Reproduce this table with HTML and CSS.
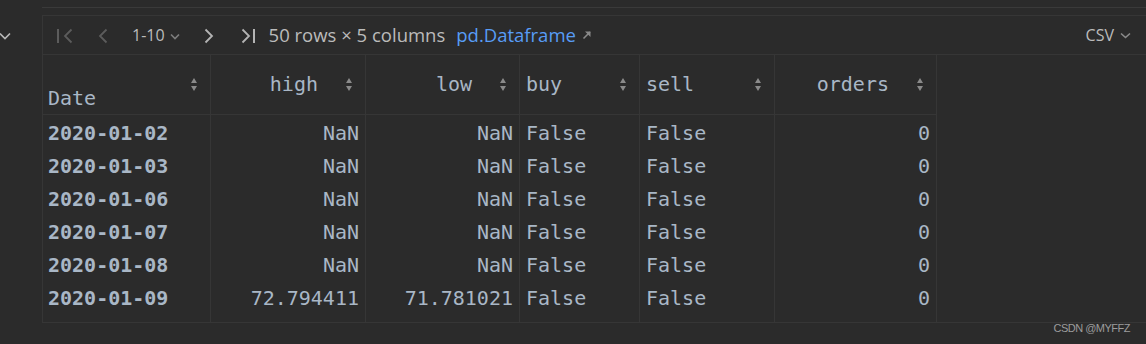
FILE: index.html
```html
<!DOCTYPE html>
<html>
<head>
<meta charset="utf-8">
<link rel="stylesheet" href="styles.css">
</head>
<body>
<div class="page">
  <div class="gutter">
    <svg class="fold" width="12" height="8" viewBox="0 0 12 8"><path d="M1 1.5 L6 6.5 L11 1.5" fill="none" stroke="#b8b8b8" stroke-width="1.6"/></svg>
  </div>
  <div class="main">
    <div class="topline"></div>
    <div class="panel">
      <div class="toolbar">
        <svg class="ic ic-first" width="16" height="16" viewBox="0 0 16 16"><path d="M1 1 V15" stroke="#5c5c5c" stroke-width="2"/><path d="M14.5 1.5 L8 8 L14.5 14.5" fill="none" stroke="#5c5c5c" stroke-width="1.8"/></svg>
        <svg class="ic ic-prev" width="11" height="16" viewBox="0 0 11 16"><path d="M9.5 1.5 L3 8 L9.5 14.5" fill="none" stroke="#5c5c5c" stroke-width="1.8"/></svg>
        <span class="range">1-10</span>
        <svg class="ic ic-dd" width="10" height="7" viewBox="0 0 10 7"><path d="M1 1.5 L5 5.5 L9 1.5" fill="none" stroke="#7d7d7d" stroke-width="1.6"/></svg>
        <svg class="ic ic-next" width="11" height="16" viewBox="0 0 11 16"><path d="M1.5 1.5 L8 8 L1.5 14.5" fill="none" stroke="#b4b4b4" stroke-width="1.8"/></svg>
        <svg class="ic ic-last" width="15" height="16" viewBox="0 0 15 16"><path d="M1.5 1.5 L8 8 L1.5 14.5" fill="none" stroke="#b4b4b4" stroke-width="1.8"/><path d="M13 1 V15" stroke="#b4b4b4" stroke-width="2"/></svg>
        <span class="summary">50 rows × 5 columns</span>
        <span class="link">pd.Dataframe</span>
        <svg class="ic ic-ext" width="10" height="10" viewBox="0 0 10 10"><path d="M1.5 8.5 L8 2" stroke="#8a8a8a" stroke-width="1.6"/><path d="M3 1.5 H8.5 V7 Z" fill="#8a8a8a"/></svg>
        <span class="spacer"></span>
        <span class="fmt">CSV</span>
        <svg class="ic ic-fmt" width="11" height="7" viewBox="0 0 11 7"><path d="M1 1.5 L5.5 5.5 L10 1.5" fill="none" stroke="#8a8a8a" stroke-width="1.6"/></svg>
      </div>
      <table class="grid">
        <colgroup>
          <col class="c-date"><col class="c-high"><col class="c-low"><col class="c-buy"><col class="c-sell"><col class="c-orders">
        </colgroup>
        <thead>
          <tr>
            <th><div class="hc hc-index"><span class="ht">Date</span><span class="sort"></span></div></th>
            <th><div class="hc hc-num"><span class="ht">high</span><span class="sort"></span></div></th>
            <th><div class="hc hc-num"><span class="ht">low</span><span class="sort"></span></div></th>
            <th><div class="hc hc-text"><span class="ht">buy</span><span class="sort"></span></div></th>
            <th><div class="hc hc-text"><span class="ht">sell</span><span class="sort"></span></div></th>
            <th><div class="hc hc-num"><span class="ht">orders</span><span class="sort"></span></div></th>
          </tr>
        </thead>
        <tbody>
          <tr class="first"><td class="idx">2020-01-02</td><td class="num">NaN</td><td class="num">NaN</td><td>False</td><td>False</td><td class="num">0</td></tr>
          <tr><td class="idx">2020-01-03</td><td class="num">NaN</td><td class="num">NaN</td><td>False</td><td>False</td><td class="num">0</td></tr>
          <tr><td class="idx">2020-01-06</td><td class="num">NaN</td><td class="num">NaN</td><td>False</td><td>False</td><td class="num">0</td></tr>
          <tr><td class="idx">2020-01-07</td><td class="num">NaN</td><td class="num">NaN</td><td>False</td><td>False</td><td class="num">0</td></tr>
          <tr><td class="idx">2020-01-08</td><td class="num">NaN</td><td class="num">NaN</td><td>False</td><td>False</td><td class="num">0</td></tr>
          <tr class="last"><td class="idx">2020-01-09</td><td class="num">72.794411</td><td class="num">71.781021</td><td>False</td><td>False</td><td class="num">0</td></tr>
        </tbody>
      </table>
    </div>
  </div>
</div>
<div class="watermark">CSDN @MYFFZ</div>
</body>
</html>
```

FILE: styles.css
```css
html, body {
  margin: 0;
  padding: 0;
  background: #2b2b2b;
  width: 1146px;
  height: 344px;
  overflow: hidden;
}

body {
  position: relative;
  font-family: "Open Sans", "Noto Sans", sans-serif;
  color: #bbbbbb;
}

.page {
  display: flex;
}

.gutter {
  width: 42px;
  flex: none;
  padding-top: 32px;
}

.fold {
  display: block;
  margin-left: -1px;
}

.main {
  flex: 1;
  min-width: 0;
}

.topline {
  height: 7px;
  border-bottom: 1px solid #3a3a3a;
}

.panel {
  margin-top: 7px;
  border-top: 1px solid #363636;
  border-left: 1px solid #363636;
  border-bottom: 1px solid #363636;
}

.toolbar {
  display: flex;
  align-items: center;
  box-sizing: content-box;
  height: 37px;
  padding: 0 15px 1px 14px;
  border-bottom: 1px solid #363636;
}

.ic {
  display: block;
  flex: none;
}

.ic-first { margin-top: 2px; }
.ic-prev { margin-left: 24px; margin-top: 2px; }
.range {
  margin-left: 24px;
  font-size: 16px;
  color: #bbbbbb;
}
.ic-dd { margin-left: 5px; margin-top: 3px; }
.ic-next { margin-left: 24px; margin-top: 2px; }
.ic-last { margin-left: 26px; margin-top: 2px; }

.summary {
  margin-left: 13px;
  font-size: 18.5px;
  color: #bbbbbb;
}

.link {
  margin-left: 11px;
  font-size: 18.5px;
  color: #589df6;
}

.ic-ext { margin-left: 6px; margin-top: 1px; }

.spacer { flex: 1; }

.fmt {
  font-size: 16px;
  color: #bbbbbb;
}

.ic-fmt { margin-left: 6px; margin-top: 2px; }

.grid {
  border-collapse: separate;
  border-spacing: 0;
  table-layout: fixed;
  width: 894px;
  font-family: "DejaVu Sans Mono", "Liberation Mono", monospace;
  font-size: 20px;
  color: #a9b7c6;
}

.c-date { width: 168px; }
.c-high { width: 155px; }
.c-low { width: 154px; }
.c-buy { width: 120px; }
.c-sell { width: 135px; }
.c-orders { width: 162px; }

th, td {
  border-right: 1px solid #363636;
  padding: 0;
  box-sizing: border-box;
}

th {
  font-weight: normal;
  border-bottom: 1px solid #363636;
  height: 60px;
  vertical-align: top;
}

.hc {
  display: flex;
  height: 59px;
  align-items: center;
  padding-right: 12px;
  line-height: 33px;
}

.hc-num {
  justify-content: flex-end;
  gap: 28px;
}

.hc-text {
  justify-content: space-between;
  padding-left: 6px;
}

.hc-index {
  justify-content: space-between;
  padding-left: 5px;
}

.hc-index .ht {
  align-self: flex-end;
  margin-bottom: -1px;
}

.sort {
  display: block;
  width: 7px;
  height: 13px;
  flex: none;
  position: relative;
}

.sort::before,
.sort::after {
  content: "";
  position: absolute;
  left: 0;
  border-left: 3.5px solid transparent;
  border-right: 3.5px solid transparent;
}

.sort::before {
  top: 0;
  border-bottom: 5px solid #8a8a8a;
}

.sort::after {
  bottom: 0;
  border-top: 5px solid #8a8a8a;
}

td {
  height: 33px;
  line-height: 33px;
  padding: 0 6px;
  white-space: nowrap;
  vertical-align: top;
}

td.idx {
  font-weight: bold;
  padding-left: 5px;
}

td.num {
  text-align: right;
  padding-right: 6px;
}

tr.first td {
  height: 35px;
  padding-top: 2px;
}

tr.last td {
  height: 40px;
  padding-bottom: 7px;
}

.watermark {
  position: absolute;
  right: 16px;
  top: 322px;
  font-family: "Liberation Sans", Arial, sans-serif;
  font-size: 11px;
  color: #9c9c9c;
  letter-spacing: -0.5px;
}
```
